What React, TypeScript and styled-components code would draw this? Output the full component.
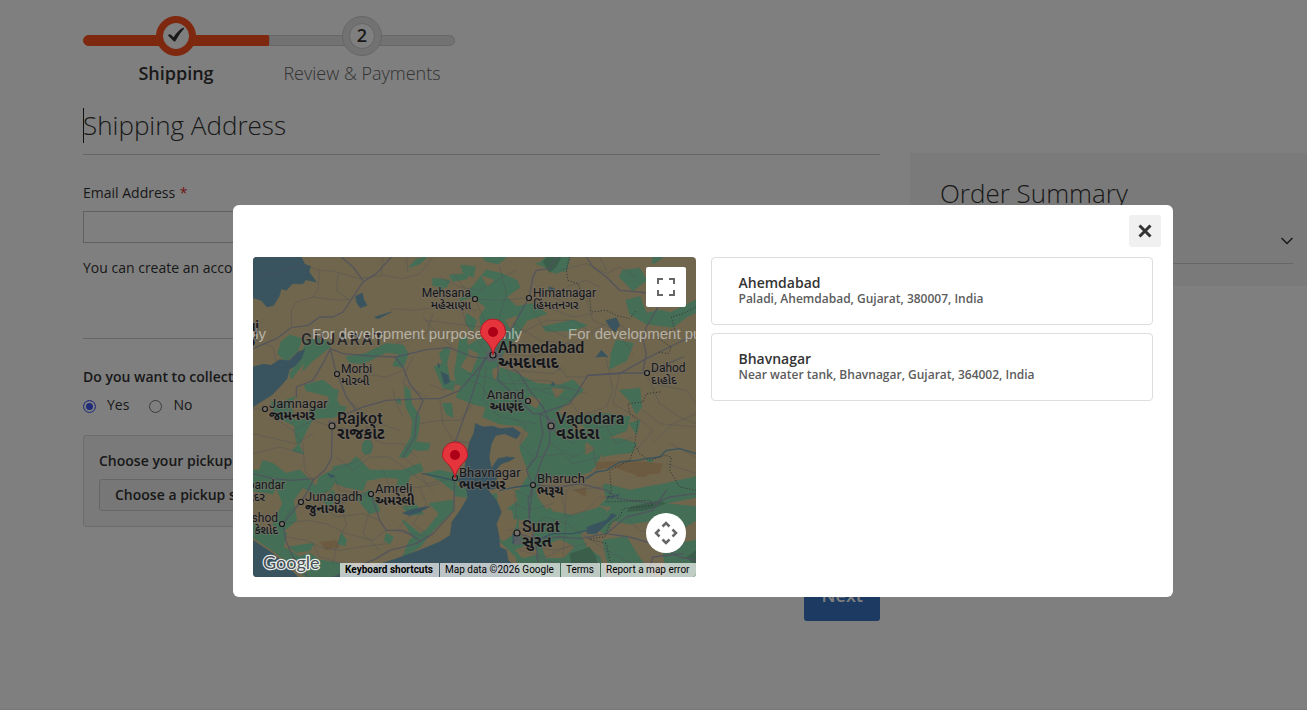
import React from 'react';
import styled, { createGlobalStyle } from 'styled-components';

const GlobalStyle = createGlobalStyle`
  * { box-sizing: border-box; }
  body {
    margin: 0;
    background: #fff;
    color: #333;
    font-family: "Open Sans", "Noto Sans", sans-serif;
    font-size: 14px;
    line-height: 20px;
    overflow: hidden;
  }
  button, input { font-family: inherit; }
`;

const Page = styled.div`
  min-height: 100vh;
  padding: 16px 0 0 83px;
  border-bottom: 1px solid #f0ecf0;
`;

/* ---------- progress bar ---------- */

const Steps = styled.ol`
  display: flex;
  width: 372px;
  margin: 0;
  padding: 0;
  list-style: none;
`;

const Step = styled.li<{ $active?: boolean }>`
  position: relative;
  flex: ${(p) => (p.$active ? '0 0 186px' : '1')};
  display: flex;
  flex-direction: column;
  align-items: center;
  gap: 5px;
  color: ${(p) => (p.$active ? '#333' : '#666')};
  font-size: 18px;
  line-height: 24px;
  font-weight: ${(p) => (p.$active ? 600 : 300)};
  &::before {
    content: '';
    position: absolute;
    left: 0;
    right: 0;
    top: 19px;
    height: 9px;
    background: ${(p) => (p.$active ? '#ff5020' : '#e4e4e4')};
    border: 1px solid ${(p) => (p.$active ? '#ff5020' : '#ccc')};
    border-radius: ${(p) => (p.$active ? '6px 0 0 6px' : '0 6px 6px 0')};
  }
`;

const Bubble = styled.span<{ $active?: boolean }>`
  position: relative;
  display: flex;
  align-items: center;
  justify-content: center;
  width: 40px;
  height: 40px;
  padding: 6px;
  border-radius: 50%;
  background: ${(p) => (p.$active ? '#ff5020' : '#e4e4e4')};
  border: 1px solid ${(p) => (p.$active ? '#ff5020' : '#ccc')};
`;

const BubbleInner = styled.span<{ $active?: boolean }>`
  display: flex;
  align-items: center;
  justify-content: center;
  width: 100%;
  height: 100%;
  border-radius: 50%;
  background: #fff;
  border: 1px solid ${(p) => (p.$active ? '#fff' : '#ccc')};
  color: #333;
  font-weight: 600;
  line-height: 22px;
  padding-bottom: 2px;
`;

/* ---------- checkout columns ---------- */

const Columns = styled.main`
  display: grid;
  grid-template-columns: minmax(0, 1fr) 397px;
  gap: 30px;
  align-items: start;
  margin-top: 16px;
`;

const FormColumn = styled.form`
  display: flex;
  flex-direction: column;
`;

const Title = styled.h2`
  margin: 0;
  font-size: 26px;
  line-height: 40px;
  font-weight: 300;
`;

const SectionTitle = styled(Title)`
  position: relative;
  padding: 4px 0 9px;
  border-bottom: 1px solid #ccc;
  &::before {
    content: '';
    position: absolute;
    left: 0;
    top: 7px;
    width: 1px;
    height: 35px;
    background: #222;
  }
`;

const Field = styled.div`
  display: flex;
  flex-direction: column;
  align-items: flex-start;
  padding: 28px 0 60px;
  border-bottom: 1px solid #ccc;
`;

const Required = styled.span`
  color: #e02b27;
  margin-left: 1px;
`;

const TextInput = styled.input`
  width: 500px;
  max-width: 100%;
  height: 32px;
  margin: 8px 0 15px;
  padding: 0 9px;
  border: 1px solid #c2c2c2;
  background: #fff;
`;

const Choice = styled.fieldset`
  margin: 0;
  padding: 28px 0 20px;
  border: 0;
  display: flex;
  gap: 20px;
`;

const Strong = styled.div`
  font-weight: 600;
`;

const Legend = styled.legend`
  float: left;
  width: 100%;
  padding: 0;
  font-weight: 600;
`;

const ChoiceBlock = styled.div`
  display: flex;
  flex-direction: column;
  gap: 8px;
`;

const Options = styled.div`
  display: flex;
  gap: 20px;
`;

const Option = styled.label`
  display: flex;
  align-items: center;
  gap: 11px;
`;

const Radio = styled.input`
  appearance: none;
  width: 13px;
  height: 13px;
  margin: 2px 0 0;
  border: 1px solid #767676;
  border-radius: 50%;
  background: #fff;
  &:checked {
    border-color: #5068f0;
    background: #4058f0;
    box-shadow: inset 0 0 0 2px #fff;
  }
`;

const PickupBox = styled.section`
  padding: 15px;
  border: 1px solid #d8d8d8;
  border-radius: 3px;
  background: #f5f5f5;
  display: flex;
  flex-direction: column;
  align-items: flex-start;
  gap: 8px;
`;

const SecondaryButton = styled.button`
  height: 32px;
  padding: 0 15px 2px;
  border: 1px solid #ccc;
  border-radius: 3px;
  background: #eee;
  color: #333;
  font-size: 14px;
  font-weight: 600;
`;

const PrimaryButton = styled.button`
  align-self: flex-end;
  height: 50px;
  margin-top: 44px;
  padding: 0 17px 2px;
  border: 0;
  border-radius: 3px;
  background: #3a74c4;
  color: #fff;
  font-size: 18px;
  font-weight: 600;
`;

const Summary = styled.aside`
  margin-top: 52px;
  padding: 20px 14px 22px 30px;
  background: #f5f5f5;
`;

const CartToggle = styled.button`
  display: flex;
  align-items: center;
  justify-content: space-between;
  width: 100%;
  margin-top: 4px;
  padding: 12px 0 11px;
  border: 0;
  border-bottom: 1px solid #ccc;
  background: none;
  color: #333;
  font-size: 18px;
  line-height: 23px;
`;

/* ---------- dialog ---------- */

const Overlay = styled.div`
  position: fixed;
  inset: 0;
  padding: 205px 134px 0 233px;
  background: rgba(0, 0, 0, 0.5);
`;

const Dialog = styled.div`
  max-width: 940px;
  border-radius: 6px;
  background: #fff;
  overflow: hidden;
`;

const DialogHeader = styled.header`
  display: flex;
  justify-content: flex-end;
  padding: 10px 12px;
`;

const CloseButton = styled.button`
  display: flex;
  align-items: center;
  justify-content: center;
  width: 32px;
  height: 32px;
  padding: 0;
  border: 0;
  border-radius: 3px;
  background: #f0f0f0;
`;

const DialogBody = styled.div`
  display: grid;
  grid-template-columns: repeat(2, minmax(0, 1fr));
  gap: 15px;
  padding: 0 20px 20px;
`;

const StoreList = styled.ul`
  display: flex;
  flex-direction: column;
  gap: 8px;
  margin: 0;
  padding: 0;
  list-style: none;
`;

const StoreCard = styled.button`
  display: block;
  width: 100%;
  padding: 16px 27px 18px;
  border: 1px solid #ddd;
  border-radius: 4px;
  background: #fff;
  text-align: left;
  font-weight: 600;
`;

const StoreName = styled.span`
  display: block;
  color: #333;
  font-size: 14px;
  line-height: 18px;
`;

const StoreAddress = styled.span`
  display: block;
  color: #5c5c5c;
  font-size: 12px;
  line-height: 14px;
`;

/* ---------- map ---------- */

const MapFrame = styled.div`
  position: relative;
  height: 320px;
  border-radius: 4px;
  overflow: hidden;
  background: #70664d;
`;

const MapCanvas = styled.svg`
  display: block;
  width: 100%;
  height: 100%;
`;

const MapControl = styled.button<{ $round?: boolean }>`
  position: absolute;
  right: 10px;
  ${(p) => (p.$round ? 'bottom: 24px;' : 'top: 10px;')}
  display: flex;
  align-items: center;
  justify-content: center;
  width: 40px;
  height: 40px;
  padding: 0;
  border: 0;
  border-radius: ${(p) => (p.$round ? '50%' : '2px')};
  background: #fff;
`;

const Attribution = styled.div`
  position: absolute;
  right: 0;
  bottom: 0;
  display: flex;
  gap: 1px;
  color: #000;
  font-family: Roboto, sans-serif;
  font-size: 10px;
  line-height: 14px;
`;

const AttributionItem = styled.span<{ $bold?: boolean }>`
  padding: 0 6px 0 5px;
  background: rgba(245, 245, 245, 0.7);
  font-weight: ${(p) => (p.$bold ? 700 : 400)};
  white-space: nowrap;
`;

const AttributionLink = styled.a`
  color: inherit;
  text-decoration: none;
`;

const MapText = styled.text`
  font-family: Roboto, "Noto Sans Gujarati", "Noto Sans", sans-serif;
  fill: #15161a;
  stroke: #77716a;
  stroke-width: 2px;
  stroke-opacity: 0.6;
  stroke-linejoin: round;
  paint-order: stroke;
`;

const Watermark = styled.text`
  font-family: "Liberation Sans", sans-serif;
  font-size: 15px;
  fill: #fff;
  fill-opacity: 0.5;
`;

type Place = {
  name: string;
  local: string;
  x: number;
  y: number;
  size: number;
  end?: boolean;
  localX?: number;
  dot?: [number, number];
};

const places: Place[] = [
  { name: 'Bhuj', local: 'ભુજ', x: 6, y: 74, size: 15, end: true, localX: 3 },
  { name: 'Mehsana', local: 'મહેસાણા', x: 218, y: 40, size: 12, end: true, dot: [222, 42] },
  { name: 'Himatnagar', local: 'હિંમતનગર', x: 280, y: 40, size: 12, dot: [276, 41] },
  { name: 'Ahmedabad', local: 'અમદાવાદ', x: 245, y: 96, size: 16, dot: [240, 98] },
  { name: 'Morbi', local: 'મોરબી', x: 88, y: 116, size: 12, dot: [84, 117] },
  { name: 'Dahod', local: 'દાહોદ', x: 398, y: 115, size: 12, dot: [394, 116] },
  { name: 'Anand', local: 'આણંદ', x: 271, y: 142, size: 13, end: true, dot: [275, 144] },
  { name: 'Jamnagar', local: 'જામનગર', x: 16, y: 151, size: 13, dot: [12, 152] },
  { name: 'Rajkot', local: 'રાજકોટ', x: 84, y: 167, size: 16, dot: [79, 169] },
  { name: 'Vadodara', local: 'વડોદરા', x: 303, y: 167, size: 16, dot: [298, 169] },
  { name: 'Bhavnagar', local: 'ભાવનગર', x: 206, y: 220, size: 13, dot: [202, 221] },
  { name: 'Bharuch', local: 'ભરૂચ', x: 284, y: 226, size: 13, dot: [280, 228] },
  { name: 'Amreli', local: 'અમરેલી', x: 122, y: 236, size: 13, dot: [118, 237] },
  { name: 'Junagadh', local: 'જુનાગઢ', x: 52, y: 244, size: 13, dot: [48, 245] },
  { name: 'Porbandar', local: 'પોરબંદર', x: 32, y: 232, size: 12, end: true, localX: 12 },
  { name: 'Keshod', local: 'કેશોદ', x: 25, y: 265, size: 12, end: true, dot: [29, 267] },
  { name: 'Surat', local: 'સુરત', x: 269, y: 275, size: 16, dot: [264, 276] },
];

const forest = [
  'M700 40L745 50L790 70L800 90L760 120L790 150L840 140L880 170L820 190L790 240L750 290L735 330L790 350L850 380L920 385L960 370L990 400L940 440L900 470L950 480L1060 470L1130 480L1120 520L1070 540L1040 600L1020 640L960 660L900 655L860 680L850 720L880 760L920 740L950 760L990 730L1060 760L1040 800L980 830L1000 870L1040 900L1060 960H800L790 900L740 850L790 830L780 760L720 740L700 720L760 700L800 700L830 650L810 600L800 570L830 530L800 505L740 500L690 480L700 450L660 440L610 420L630 380L660 340L680 290L640 270L690 240L680 180L700 150L660 120L620 130L650 100Z',
  'M690 0H760L735 20L700 12ZM880 0H950L940 40L905 48L860 20ZM1110 40L1160 35L1180 70L1140 100L1100 60ZM1120 130L1160 120L1180 170L1220 160L1300 180L1260 210L1180 200L1130 170ZM1200 0H1230L1200 20ZM1250 170L1329 130V165L1280 190Z',
  'M870 210L960 190L1000 205L960 220L880 222ZM1090 250L1140 260L1120 310L1070 335L1075 290ZM1100 400L1160 395L1165 450L1150 470L1130 430ZM1130 500L1160 490L1150 530ZM850 20L890 10L880 30Z',
  'M520 0L500 20L470 30L490 8ZM540 65L590 70L580 90L540 85ZM590 55L650 50L640 65L600 72ZM625 25L666 30L660 60L630 45ZM555 80L575 85L560 105Z',
  'M85 255L110 235L145 245L135 280L100 312L75 290ZM160 250L200 245L190 290L150 320L130 345L115 365L110 350L140 310ZM200 255L225 250L230 270L180 310L150 340L160 310ZM280 300L340 290L400 260L450 265L465 290L450 330L420 325L440 290L400 285L360 305L330 320L290 315ZM155 385L210 370L235 390L240 420L200 410L160 400ZM235 395L255 400L250 430L270 460L240 480L220 460ZM170 455L220 450L240 480L170 485Z',
  'M55 435L110 440L120 470L90 480L130 490L180 485L165 510L140 560L120 580L150 590L130 550L125 505L70 480ZM100 430L125 420L110 445ZM185 380L200 390L180 400ZM220 450L280 450L270 470L240 480Z',
  'M455 390L470 400L475 440L500 480L495 520L485 570L460 600L440 600L475 540L480 490L460 450ZM480 555L530 560L525 578L490 580ZM545 330L570 320L560 290L580 270L590 280L580 320L590 370L605 375L600 400L570 390ZM620 250L640 240L645 290L620 330L650 350L640 390L610 380L605 350ZM570 440L595 440L600 480L580 470ZM640 170L670 190L660 220L640 200ZM430 430L440 425L442 442Z',
  'M330 570A14 14 0 1 0 355 572A14 14 0 1 0 330 570ZM30 612L60 620L100 650L140 640L190 690L200 660L240 640L260 650L230 700L190 715L150 690L120 730L130 790L80 830L60 800L90 740L70 690L20 640ZM0 640L30 640L70 680L60 710L0 700Z',
  'M240 630L290 620L310 600L350 640L450 640L500 620L510 640L450 665L390 660L340 670L330 700L280 690L250 680ZM250 650L320 650L330 670L260 670ZM350 700L380 760L350 770L310 720ZM440 660L470 655L460 690L430 690ZM520 650L560 640L620 655L600 700L560 670ZM600 680L650 700L640 720L605 715ZM240 700L250 720L230 750L210 730Z',
  'M530 740L600 730L600 760L540 820L500 870L450 900L470 850L520 820L560 770ZM450 750L490 745L510 770L470 775ZM265 830L280 850L275 865L255 860ZM400 830L420 840L410 860L395 850ZM450 790L500 830L510 850L480 840Z',
  'M0 800L50 830L70 810L100 830L90 870L140 900L170 890L200 910L300 925L330 950L240 960H160L60 880L0 840ZM110 870L180 860L170 880L130 885Z',
  'M1050 680L1130 700L1240 680L1329 660V720L1230 740L1329 750V790L1260 830L1200 790L1130 800L1080 790L1060 830L1020 810L1080 750L1020 740L1060 720ZM1050 850L1120 840L1150 890L1200 960H1080L1060 900ZM1230 870L1329 850V960H1240ZM1030 550L1100 545L1150 560L1130 600L1060 615ZM1100 590L1200 610L1170 640L1110 640Z',
];

const clearings = [
  'M830 420L860 430L850 450L830 440ZM1020 640L1060 600L1140 590L1180 610L1150 650L1090 650L1050 680L1000 670ZM890 740L960 700L1060 720L1030 750L960 770L900 760ZM870 870L920 850L960 870L930 900L880 900ZM720 340L740 330L725 365ZM850 700L890 690L900 710L860 720Z',
  'M740 610L770 600L785 610L770 640L740 640ZM735 690L780 690L790 730L750 760L735 730ZM740 790L790 790L780 830L750 850L735 830ZM800 790L850 810L830 850L800 830ZM200 880L260 885L255 900L210 895ZM790 880L840 860L850 890L810 900Z',
  'M690 60L720 70L705 85ZM760 190L790 180L775 215ZM900 395L930 400L910 420ZM960 500L990 510L970 525ZM1000 560L1020 575L1000 590Z',
];

const scrub = [
  'M1030 615L1140 610L1230 620L1220 650L1150 655L1080 630L1030 640Z',
  'M200 855L250 850L260 870L220 880ZM1150 640L1190 640L1180 660L1150 660ZM960 700L1000 690L1000 720Z',
];

const darkForest = [
  'M880 0H925L910 30L890 48L870 15ZM1130 750L1220 730L1240 740L1180 760L1120 765ZM950 890L1010 870L1030 900L1040 960H960ZM1300 900L1329 880V930Z',
];

const water = [
  'M0 0H145L155 22L172 28L168 45L190 75L158 68L150 80L118 80L100 100L85 95L78 118L62 145L42 150L25 130L0 122Z',
  'M0 330L30 322L55 325L80 308L108 312L135 285L155 278L145 305L128 325L108 338L102 365L75 395L55 415L30 430L0 450Z',
  'M668 500L690 510L720 508L740 515L780 512L803 528L790 545L755 530L728 535L715 560L708 600L715 635L735 605L760 600L785 602L770 612L745 620L728 640L735 660L720 680L738 690L705 700L730 730L745 765L730 800L738 840L740 870L760 880L765 910L790 930L800 960H240L330 940L430 905L500 880L560 855L592 835L597 795L625 755L645 720L640 690L615 672L635 640L640 600L650 555L662 530Z',
  'M0 850L30 870L60 890L100 925L135 960H0Z',
  'M308 118L328 108L332 128L342 145L322 152L312 138ZM366 180L415 165L375 185ZM565 345L585 355L590 375L575 382ZM555 320L560 322L558 332ZM1060 190L1090 183L1100 205L1085 225L1070 210ZM1030 300L1045 280L1065 300L1050 298ZM1003 810L1030 800L1060 790L1075 770L1090 775L1060 800L1030 830L1003 830ZM450 768L475 758L505 752L530 748L500 765L470 775ZM225 650L245 658L235 662ZM1060 720L1100 712L1080 722ZM900 375L905 385L895 385ZM890 90L905 95L900 105L888 98ZM780 830L790 850L780 860Z',
];

const highways = [
  'M415 0L370 50L330 75L300 120L270 165L240 180L200 180L165 205L115 212L70 245L0 275',
  'M232 275L270 290L350 297L430 300L520 278L590 272L660 300L700 305L720 293',
  'M720 293L700 300L680 340L655 420L630 490L605 560L600 610',
  'M720 293L760 320L800 350L830 400L870 450L895 505',
  'M735 320L735 370L780 410L840 470L860 470L950 440L1005 355L1100 350L1180 305L1280 255L1329 235',
  'M860 470L870 530L850 600L820 640L840 684L828 780L850 870L855 920',
  'M890 510L890 560L870 600L840 684L825 730L830 780',
  'M605 665L603 760L540 830L490 860L410 880L370 905L240 960',
  'M238 505L235 605L215 640L180 670L160 710L144 734L90 800L98 850L120 900L165 960',
  'M232 275L215 310L180 370L130 390L130 420M232 275L245 330L280 420L310 460M255 480L330 450L400 430L515 425L560 425L620 400L680 330L700 300',
  'M425 300L450 330L470 380L510 430L490 480L485 540L450 600',
  'M354 711L380 790L400 820L450 820L500 850M0 650L60 665L120 670L180 665M828 122L840 60L850 40L890 35L910 0M828 122L790 190L760 240L720 293',
  'M1005 355L1100 348L1180 348L1290 300M1000 0L1020 30L1060 60L1100 100L1160 105L1190 110M1215 150L1180 210L1170 250L1180 290L1170 340',
  'M840 684L920 690L980 680L1060 700L1100 725L1200 740L1250 720L1329 710M793 829L850 845L920 840L980 845L1060 830L1130 840L1200 860L1280 900L1329 910M1060 830L1120 780L1200 760L1240 700',
  'M895 505L880 480L860 470M1180 960L1200 900L1290 890M265 0L300 30L330 70',
];

const minorRoads = [
  'M0 55L60 50L150 25L200 40L240 42L320 65L390 55L450 65L500 50L540 0M390 0L385 50M460 0L465 45M255 50L250 100L290 130M200 40L195 100L180 120L130 135L115 160L115 210M180 120L260 130L300 125M0 245L60 270L70 310L110 345',
  'M415 155L480 160L560 150L620 155L670 160M510 180L560 240L600 270M520 190L600 200L680 210M540 170L520 230L430 260M620 140L640 200L700 290M600 50L640 100L666 126L690 180L720 293M560 60L620 90L680 100L750 60L790 40M666 126L740 130L828 122L880 150L960 180L1020 170M740 30L760 110L740 180L730 290',
  'M780 200L860 250L960 260L1000 230L1080 190L1140 230M760 290L840 300L900 280L960 250M780 240L880 190L960 190L1020 230M840 160L870 210L940 240M860 100L940 140L980 150M920 40L1000 20L1060 50L1100 30L1150 60M940 90L1000 70L1040 90',
  'M740 320L850 310L930 340L940 360L1000 360M760 330L800 420L840 440M790 370L880 370L960 400M640 350L700 360L760 380L820 380M640 370L680 380L720 440M700 330L690 430L740 480L850 500M770 340L900 350L930 330M800 400L940 390L1000 410M860 400L950 430L1000 500M900 300L920 340M820 270L860 330',
  'M480 300L460 340L450 380L520 420M530 380L570 400L620 380M560 425L570 500L600 550L660 560M500 500L560 490L620 490L660 440M440 520L380 500L320 520L240 510L180 490L120 520L60 480M120 520L150 560L155 640L180 670M0 455L70 460L120 500M300 440L360 490L350 540L390 560L450 560L490 600M280 330L320 350L400 360L450 340',
  'M320 480L340 500L360 570L320 610L240 640M180 530L130 560L0 530M0 590L80 570L150 590M250 600L300 640L350 600L410 600L450 630L520 680L600 665M420 400L430 440L450 480M450 600L500 640L520 680L540 700M390 640L410 690L360 711M240 650L260 700L350 711L420 700L500 690L560 680M140 734L200 760L260 740L350 711M220 700L200 740L250 780L330 770L380 790',
  'M100 840L160 850L200 870L260 880L320 870L400 860M90 800L160 790L220 800L280 830L360 850L400 820M160 720L110 760L90 800M180 860L200 900L270 920M260 740L280 800L250 870L240 920M350 760L330 830L380 880M450 700L470 780L430 820M500 690L520 740L480 800L520 830M420 820L530 840',
  'M780 480L820 510L800 560L840 600L820 640M900 520L960 560L1010 520L1090 500M890 560L960 600L1020 570L1030 640L1000 660L940 700L935 780L900 800M880 640L920 690L940 780L930 900M850 600L930 590L960 620L1040 600M790 700L830 720L870 690M785 740L830 760L900 740M785 710L790 780L850 850M760 820L830 810L880 780L940 800L1000 840M800 880L880 900L960 860',
  'M1000 130L1020 190L1090 220L1140 290M1060 310L1080 400L1060 450L1000 470M1100 350L1080 440L1150 480L1200 520L1150 580M1180 350L1220 440L1280 480L1329 500M1200 380L1300 400L1329 440M1060 510L1090 560L1140 540M1170 460L1220 500L1329 510M940 780L1000 760L1040 720L1100 725M960 700L1050 690M1000 840L1060 880L1140 920L1150 960M1120 780L1160 820L1240 840M1200 560L1260 500L1329 470M1060 40L1040 0M1240 620L1329 650M1250 560L1329 600M850 870L900 880L1000 860M850 900L940 930L1000 920',
];

const borders =
  'M950 0L940 40L945 70L975 80L985 110L1010 125L1015 165L1060 160L1090 175L1130 185L1150 160M1329 150L1290 170L1255 180L1265 215L1210 240L1255 270L1245 290L1215 285M1220 405L1180 410L1170 435L1125 440L1130 470L1155 490L1145 560L1160 590L1190 610L1235 595L1255 600L1250 640L1280 690L1329 700M1145 570L1130 610L1070 640L1075 700L1060 735L1190 730L1200 745L1110 755L1100 780L1070 800L1055 840L1005 845L1060 860L1070 910L1100 950';

const rivers =
  'M1329 590L1280 575L1240 580L1220 600L1180 605L1150 610L1100 615L1060 640L1030 645L1000 665M840 684L790 690L740 700M600 670L560 660L510 650M1003 820L960 830L900 830L850 850';

const Pin = ({ x, y }: { x: number; y: number }) => (
  <g transform={`translate(${x} ${y})`}>
    <path
      d="M0 0C-1 -6 -3 -9 -6 -13C-10 -17 -12.500 -19 -12.500 -23.500A12.500 12.500 0 0 1 12.500 -23.500C12.500 -19 10 -17 6 -13C3 -9 1 -6 0 0Z"
      fill="#e5343b"
      stroke="#b01a28"
      strokeWidth="1"
    />
    <circle cx="0" cy="-23" r="5" fill="#ad0016" />
  </g>
);

const StoreMap = () => (
  <MapFrame>
    <MapCanvas viewBox="0 0 443 320" preserveAspectRatio="xMinYMin slice" role="img" aria-label="Map of pickup stores">
      <g transform="scale(0.333333)" fill="none" strokeLinejoin="round" strokeLinecap="round">
        <g fill="#456e56" stroke="#456e56" strokeWidth="4">
          {forest.map((d) => <path key={d} d={d} />)}
        </g>
        <g fill="#71664c" stroke="#71664c" strokeWidth="6">
          {clearings.map((d) => <path key={d} d={d} />)}
        </g>
        <g fill="#6c5b41">{scrub.map((d) => <path key={d} d={d} />)}</g>
        <g fill="#3b5e4a">{darkForest.map((d) => <path key={d} d={d} />)}</g>
        <g fill="#39545f" stroke="#39545f" strokeWidth="2">
          {water.map((d) => <path key={d} d={d} />)}
        </g>
        <path d={rivers} stroke="#39545f" strokeWidth="4" />
        <g stroke="#50515a" strokeOpacity="0.6" strokeWidth="2">
          {minorRoads.map((d) => <path key={d} d={d} />)}
        </g>
        <g stroke="#50525e" strokeOpacity="0.85" strokeWidth="4">
          {highways.map((d) => <path key={d} d={d} />)}
        </g>
        <path d={borders} stroke="#34363a" strokeWidth="3" strokeDasharray="1 8" />
        <g fill="#5d5b63" fillOpacity="0.8">
          <path d="M700 285L715 275L750 290L740 310L705 315ZM880 490L905 485L910 520L885 525ZM225 490L250 495L245 515L230 515ZM780 840L800 835L810 860L785 865Z" />
        </g>
      </g>
      <MapText x="48" y="88" fontSize="16" fontWeight="500" letterSpacing="2" fillOpacity="0.8">GUJARAT</MapText>
      {places.map((p) => {
        const big = p.size > 14;
        const medium = p.size === 13;
        const anchor = p.end ? 'end' : 'start';
        return (
          <g key={p.name}>
            {p.dot && <circle cx={p.dot[0]} cy={p.dot[1]} r={big ? 3 : 2.5} fill="#77716a" stroke="#15161a" strokeWidth="1.200" />}
            <MapText x={p.x} y={p.y} fontSize={p.size} fontWeight={big ? 500 : 400} textAnchor={anchor}>{p.name}</MapText>
            <MapText
              x={p.localX ?? p.x}
              y={p.y + (big ? 15 : 12)}
              fontSize={big ? 16 : p.size}
              fontWeight={big || medium ? 700 : 500}
              textAnchor={anchor}
            >
              {p.local}
            </MapText>
          </g>
        );
      })}
      {[-197, 59, 315].map((x) => <Watermark key={x} x={x} y="82">For development purposes only</Watermark>)}
      <Pin x={202} y={221} />
      <Pin x={240} y={98} />
      <text x="10" y="312" fontFamily="Lato, sans-serif" fontSize="18" fontWeight="400" fill="#4a5054" stroke="#fff" strokeOpacity="0.9" strokeWidth="2.500" strokeLinejoin="round" paintOrder="stroke">
        Google
      </text>
    </MapCanvas>
    <MapControl type="button" aria-label="Toggle fullscreen view">
      <svg width="18" height="18" viewBox="0 0 18 18" fill="#666">
        <path d="M0 0v6h2V2h4V0zM18 0h-6v2h4v4h2zM16 12v4h-4v2h6v-6zM2 12H0v6h6v-2H2z" />
      </svg>
    </MapControl>
    <MapControl type="button" $round aria-label="Map camera controls">
      <svg width="24" height="24" viewBox="0 0 24 24" fill="none" stroke="#666" strokeWidth="2.500">
        <path d="M8.500 5.500L12 2L15.500 5.500M8.500 18.500L12 22L15.500 18.500M5.500 8.500L2 12L5.500 15.500M18.500 8.500L22 12L18.500 15.500" />
      </svg>
    </MapControl>
    <Attribution>
      <AttributionItem $bold>Keyboard shortcuts</AttributionItem>
      <AttributionItem>Map data ©2026 Google</AttributionItem>
      <AttributionItem><AttributionLink href="#terms">Terms</AttributionLink></AttributionItem>
      <AttributionItem><AttributionLink href="#report">Report a map error</AttributionLink></AttributionItem>
    </Attribution>
  </MapFrame>
);

const stores = [
  { name: 'Ahemdabad', address: 'Paladi, Ahemdabad, Gujarat, 380007, India' },
  { name: 'Bhavnagar', address: 'Near water tank, Bhavnagar, Gujarat, 364002, India' },
];

export default function App() {
  return (
    <>
      <GlobalStyle />
      <Page>
        <Steps>
          <Step $active>
            <Bubble $active>
              <BubbleInner $active>
                <svg width="18" height="16" viewBox="0 0 18 16">
                  <path d="M1 8.500Q2.500 6.500 4.200 8L6.500 10.200Q11 3.500 16 .8Q17.500 .5 17 1.800Q12 7 8.500 14Q7.500 15 6.500 14Z" fill="#333" />
                </svg>
              </BubbleInner>
            </Bubble>
            Shipping
          </Step>
          <Step>
            <Bubble>
              <BubbleInner>2</BubbleInner>
            </Bubble>
            Review &amp; Payments
          </Step>
        </Steps>
        <Columns>
          <FormColumn>
            <SectionTitle>Shipping Address</SectionTitle>
            <Field>
              <label htmlFor="email">Email Address <Required>*</Required></label>
              <TextInput id="email" type="email" />
              <span>You can create an account after checkout.</span>
            </Field>
            <Choice>
              <ChoiceBlock>
                <Legend>Do you want to collect your order from store?</Legend>
                <Options>
                  <Option><Radio type="radio" name="collect" defaultChecked />Yes</Option>
                  <Option><Radio type="radio" name="collect" />No</Option>
                </Options>
              </ChoiceBlock>
            </Choice>
            <PickupBox>
              <Strong>Choose your pickup store</Strong>
              <SecondaryButton type="button">Choose a pickup store</SecondaryButton>
            </PickupBox>
            <PrimaryButton type="button">Next</PrimaryButton>
          </FormColumn>
          <Summary>
            <Title as="h3">Order Summary</Title>
            <CartToggle type="button">
              <span>1 Item in Cart</span>
              <svg width="12" height="8" viewBox="0 0 12 8" fill="none" stroke="#333" strokeWidth="1.500">
                <path d="M.5 1L6 6.500L11.500 1" />
              </svg>
            </CartToggle>
          </Summary>
        </Columns>
      </Page>
      <Overlay>
        <Dialog role="dialog" aria-modal="true" aria-label="Choose a pickup store">
          <DialogHeader>
            <CloseButton type="button" aria-label="Close">
              <svg width="14" height="14" viewBox="0 0 14 14" stroke="#333" strokeWidth="3">
                <path d="M1.500 1.500L12.500 12.500M12.500 1.500L1.500 12.500" />
              </svg>
            </CloseButton>
          </DialogHeader>
          <DialogBody>
            <StoreMap />
            <StoreList>
              {stores.map((s) => (
                <li key={s.name}>
                  <StoreCard type="button">
                    <StoreName>{s.name}</StoreName>
                    <StoreAddress>{s.address}</StoreAddress>
                  </StoreCard>
                </li>
              ))}
            </StoreList>
          </DialogBody>
        </Dialog>
      </Overlay>
    </>
  );
}
